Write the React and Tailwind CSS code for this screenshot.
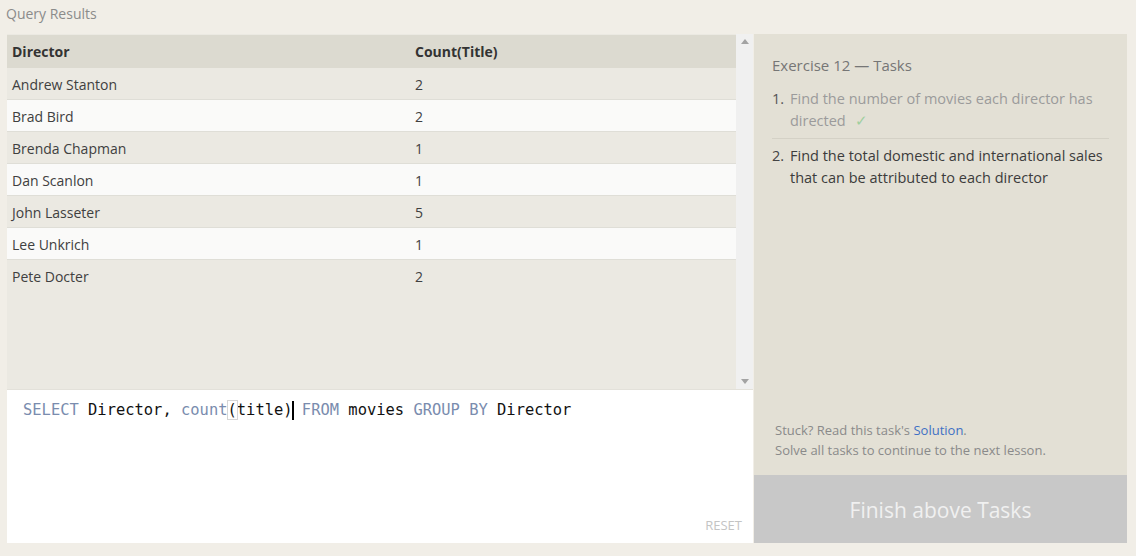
import React from "react";

const rows = [
  ["Andrew Stanton", 2],
  ["Brad Bird", 2],
  ["Brenda Chapman", 1],
  ["Dan Scanlon", 1],
  ["John Lasseter", 5],
  ["Lee Unkrich", 1],
  ["Pete Docter", 2],
];

const sans = { fontFamily: '"Open Sans", "Noto Sans", sans-serif' };

export default function App() {
  return (
    <div className="w-[1136px] h-[556px] bg-[#f1eee7] overflow-hidden" style={sans}>
      {/* Title */}
      <div className="h-[34px] pl-[6px] pt-[3px] text-[14px] text-[#8b8b8b]">Query Results</div>

      <div className="flex gap-px pl-[7px]">
        {/* Left column: results + editor */}
        <div className="w-[746px] flex flex-col">
          <div className="h-[355px] flex">
            <div className="flex-1 bg-[#ebe9e2] pt-px">
              <div className="flex h-[33px] items-center bg-[#dcdad0] font-bold text-[14px] text-[#333]">
                <div className="w-[408px] pl-[5px]">Director</div>
                <div>Count(Title)</div>
              </div>
              {rows.map(([name, n], i) => (
                <div
                  key={name}
                  className={`flex h-[32px] items-center text-[14px] text-[#404040] ${
                    i < rows.length - 1 ? "border-b border-[#dfded7]" : ""
                  } ${i % 2 === 1 ? "bg-[#fafaf9]" : "bg-[#ebe9e2]"}`}
                >
                  <div className="w-[408px] pl-[5px] pt-px">{name}</div>
                  <div className="pt-px">{n}</div>
                </div>
              ))}
            </div>
            {/* Scrollbar */}
            <div className="w-[17px] bg-[#f0f0f0] flex flex-col justify-between items-center py-[5px]">
              <svg width="8" height="5" viewBox="0 0 8 5"><path d="M0 5L4 0L8 5Z" fill="#a3a3a3" /></svg>
              <svg width="8" height="5" viewBox="0 0 8 5"><path d="M0 0L4 5L8 0Z" fill="#a3a3a3" /></svg>
            </div>
          </div>
          {/* Editor */}
          <div className="h-[154px] bg-white border-t border-[#e3e1da] flex flex-col">
            <div
              className="pl-[16px] pt-[10px] text-[15.45px] text-[#111] whitespace-pre leading-[20px]"
              style={{ fontFamily: '"DejaVu Sans Mono", monospace' }}
            >
              <span className="text-[#7a8cae]">SELECT</span> Director, <span className="text-[#7a8cae]">count</span>
              <span className="outline outline-1 outline-[#d6d6d6]">(</span>title)
              <span className="inline-block w-[2px] h-[19px] bg-black align-middle -ml-px mr-[-1px]"></span>{" "}
              <span className="text-[#7a8cae]">FROM</span> movies <span className="text-[#7a8cae]">GROUP BY</span> Director
            </div>
            <div className="mt-auto self-end pr-[11px] pb-[8px] text-[13px] text-[#c4c4c4]">RESET</div>
          </div>
        </div>

        {/* Right column: tasks */}
        <div className="w-[373px] h-[509px] flex flex-col">
          <div className="flex-1 bg-[#e3e0d5] flex flex-col px-[18px] pt-[20px] pb-[15px]">
            <div className="text-[15px] text-[#767676]">Exercise 12 — Tasks</div>
            <ol className="mt-[11px] text-[14.5px] leading-[22.5px]">
              <li className="flex pb-[5px] border-b border-[#d4d1c6]">
                <span className="w-[18px] shrink-0 text-[#555]">1.</span>
                <div className="text-[#9b9b9b]">
                  <div>Find the number of movies each director has</div>
                  <div className="flex gap-[9px]">
                    <span>directed</span>
                    <span className="text-[#9fcf9f]">✓</span>
                  </div>
                </div>
              </li>
              <li className="flex pt-[6px]">
                <span className="w-[18px] shrink-0 text-[#444]">2.</span>
                <span className="text-[#3c3c3c]">Find the total domestic and international sales that can be attributed to each director</span>
              </li>
            </ol>
            <div className="mt-auto text-[13px] text-[#8a8a8a] leading-[20px] pl-[3px]">
              <div>
                Stuck? Read this task's <span className="text-[#3f70c4]">Solution</span>.
              </div>
              <div>Solve all tasks to continue to the next lesson.</div>
            </div>
          </div>
          <div className="h-[68px] bg-[#c8c8c8] flex items-center justify-center pt-[3px] text-[21px] text-[#f0f0f0]">
            Finish above Tasks
          </div>
        </div>
      </div>
    </div>
  );
}
